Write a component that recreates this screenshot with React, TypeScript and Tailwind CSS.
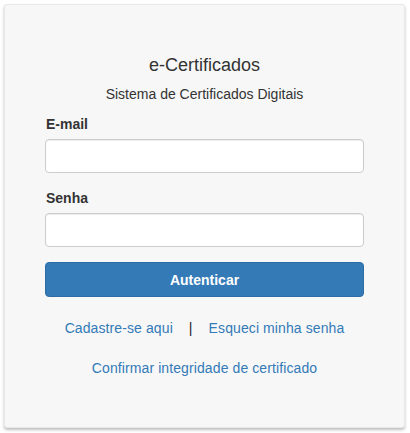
export default function App() {
  return (
    <div className="min-h-screen bg-white p-[4px] font-['Liberation_Sans',Arial,sans-serif] text-[14px] leading-[20px] text-[#333]">
      <div className="h-[424px] w-[401px] rounded-[3px] border border-[#e8e8e8] bg-[#f7f7f7] px-[40px] pt-[50px] shadow-[0_2px_3px_rgba(0,0,0,0.25)]">
        <h1 className="text-center text-[18px] leading-[20px]">e-Certificados</h1>
        <p className="mt-[9px] text-center">Sistema de Certificados Digitais</p>

        <form className="mt-[10px]">
          <label className="mb-[5px] block pl-px font-bold">E-mail</label>
          <input
            type="email"
            className="block h-[34px] w-full rounded-[4px] border border-[#ccc] bg-white px-3 shadow-[inset_0_1px_1px_rgba(0,0,0,0.075)]"
          />

          <label className="mb-[5px] mt-[15px] block pl-px font-bold">Senha</label>
          <input
            type="password"
            className="block h-[34px] w-full rounded-[4px] border border-[#ccc] bg-white px-3 shadow-[inset_0_1px_1px_rgba(0,0,0,0.075)]"
          />

          <button
            type="button"
            className="mt-[15px] block h-[35px] w-full rounded-[4px] border border-[#2e6da4] bg-[#337ab7] font-bold text-white"
          >
            Autenticar
          </button>
        </form>

        <div className="mt-[21px] text-center tracking-[0.1px]">
          <a href="#" className="text-[#337ab7]">Cadastre-se aqui</a>
          <span className="px-[16px] text-[#222]">|</span>
          <a href="#" className="text-[#337ab7]">Esqueci minha senha</a>
        </div>
        <div className="mt-[20px] text-center tracking-[0.1px]">
          <a href="#" className="text-[#337ab7]">Confirmar integridade de certificado</a>
        </div>
      </div>
    </div>
  );
}
